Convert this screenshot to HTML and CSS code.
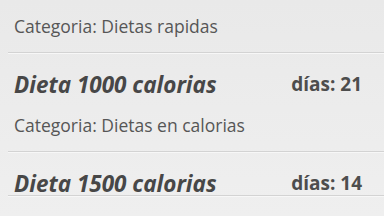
FILE: index.html
```html
<!DOCTYPE html>
<html lang="es">
<head>
    <meta charset="UTF-8">
    <meta name="viewport" content="width=device-width, initial-scale=1.0">
    <title>Dietas</title>
    <link rel="stylesheet" href="styles.css">
</head>
<body>

    <!-- Diet list -->
    <div class="list">
        <div class="item item-first">
            <p class="cat">Categoria: Dietas rapidas</p>
        </div>

        <div class="item">
            <div class="head">
                <span class="title">Dieta 1000 calorias</span>
                <span class="days">días: 21</span>
            </div>
            <p class="cat">Categoria: Dietas en calorias</p>
        </div>

        <div class="item">
            <div class="head">
                <span class="title">Dieta 1500 calorias</span>
                <span class="days">días: 14</span>
            </div>
        </div>
    </div>

</body>
</html>
```

FILE: styles.css
```css
body {
    font-family: "Open Sans", "Noto Sans", sans-serif;
    margin: 0;
    padding: 0;
    height: 100vh;
    overflow: hidden;
    background: linear-gradient(#e9e9e9, #efefef);
    color: #555;
}

.list {
    display: flex;
    flex-direction: column;
}

/* One diet row */
.item {
    margin-left: 8px;
    padding: 0 22px 0 6px;
    border-bottom: 1px solid #d3d3d3;
    box-shadow: 0 1px 0 #f7f7f7;
}

.item-first .cat {
    margin-top: 16px;
}

.head {
    display: flex;
    justify-content: space-between;
    align-items: center;
    height: 24px;
    margin-top: 19px;
}

.title {
    font-size: 22.5px;
    font-weight: bold;
    font-style: italic;
    color: #474747;
}

.days {
    font-size: 19px;
    font-weight: bold;
    color: #4d4d4d;
}

.cat {
    font-size: 17.5px;
    line-height: 20px;
    margin: 19px 0 16px;
    color: #565656;
}
```
